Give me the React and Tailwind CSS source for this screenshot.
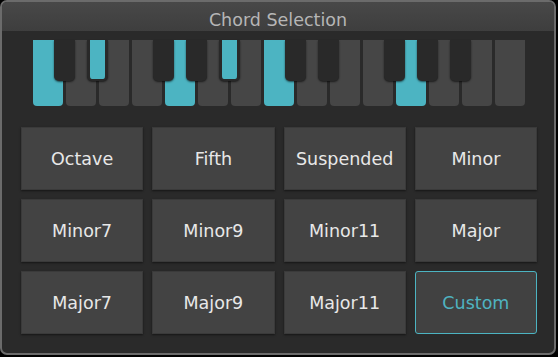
import React from 'react'

const whiteOn = [0, 4, 7, 11]
// index of white key to the left of each black key
const blacks = [
  { at: 0, on: false },
  { at: 1, on: true },
  { at: 3, on: false },
  { at: 4, on: false },
  { at: 5, on: true },
  { at: 7, on: false },
  { at: 8, on: false },
  { at: 10, on: false },
  { at: 11, on: false },
  { at: 12, on: false },
]

const chords = [
  'Octave', 'Fifth', 'Suspended', 'Minor',
  'Minor7', 'Minor9', 'Minor11', 'Major',
  'Major7', 'Major9', 'Major11', 'Custom',
]

function Keyboard(){
  return (
    <div className="relative w-[492px] h-[66px] ml-[31px] mt-[9px]">
      <div className="flex gap-[3px]">
        {Array.from({length: 15}).map((_, i) => (
          <div key={i}
            className={whiteOn.includes(i)
              ? 'w-[30px] h-[66px] rounded-b-[4px] bg-[#4cb4c2]'
              : 'w-[30px] h-[66px] rounded-b-[4px] bg-[#464646]'} />
        ))}
      </div>
      {blacks.map(b => (
        <div key={b.at}
          className={b.on
            ? 'absolute top-0 w-[21px] h-[41px] rounded-b-[5px] border-x-[3px] border-b-[2px] border-[#292929] bg-[#4cb4c2] shadow-[0_1px_2px_rgba(0,0,0,0.6)]'
            : 'absolute top-0 w-[21px] h-[41px] rounded-b-[5px] bg-[#292929] shadow-[0_1px_2px_rgba(0,0,0,0.6)]'}
          style={{left: (b.at + 1) * 33 - 12}} />
      ))}
    </div>
  )
}

export default function App(){
  return (
    <div className="w-[558px] h-[357px] bg-black" style={{fontFamily: '"DejaVu Sans", sans-serif'}}>
      <div className="w-[556px] h-[355px] border-2 border-[#6b6b6b] rounded-[7px] bg-[#2a2a2a] overflow-hidden flex flex-col">
        <div className="h-[29px] shrink-0 pt-[7px] bg-gradient-to-b from-[#484848] to-[#3e3e3e] flex items-center justify-center text-[17.5px] text-[#b6b6b6]">
          Chord Selection
        </div>
        <Keyboard />
        <div className="grid grid-cols-4 auto-rows-[63px] gap-[9px] w-[516px] ml-[19px] mt-[21px]">
          {chords.map(c => (
            <button key={c}
              className={c === 'Custom'
                ? 'flex items-center justify-center pt-[2px] rounded-[3px] border border-[#4cb4c2] bg-[#414141] text-[17.5px] text-[#4fb3c0]'
                : 'flex items-center justify-center pt-[2px] border border-[#3a3a3a] bg-[#434343] text-[17.5px] text-[#e8e8e8] shadow-[0_1px_2px_rgba(0,0,0,0.5)]'}>
              {c}
            </button>
          ))}
        </div>
      </div>
    </div>
  )
}
